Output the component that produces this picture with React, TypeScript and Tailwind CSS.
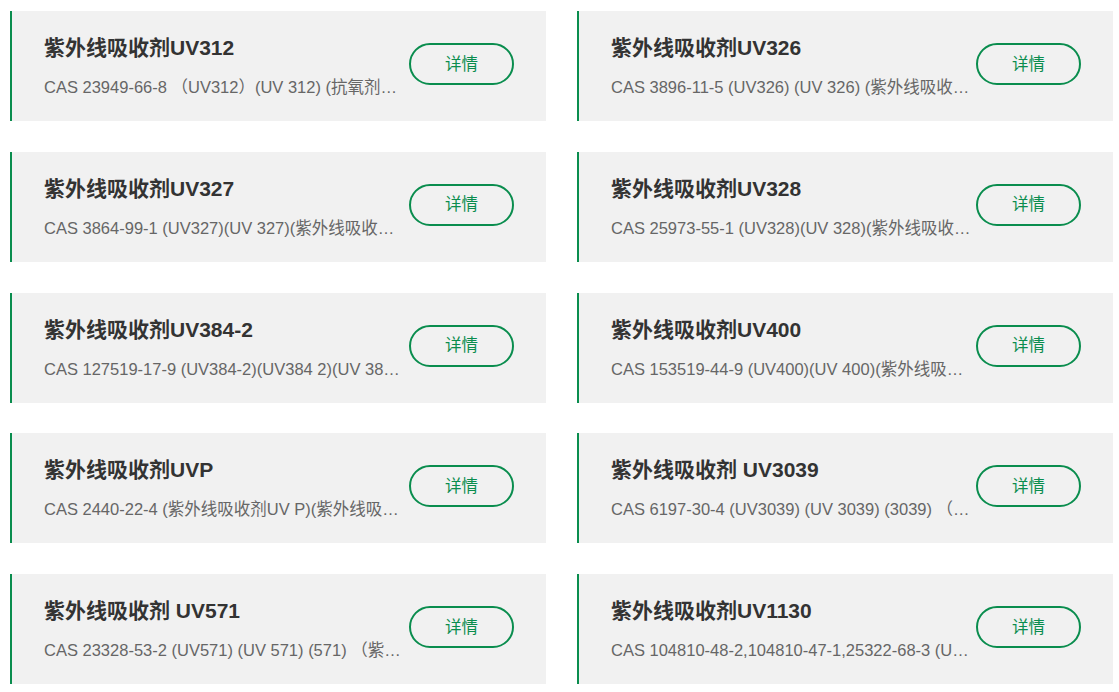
import React from "react";

interface Product {
  name: string,
  cas: string
}

const products: Product[] = [
  { name: "紫外线吸收剂UV312", cas: "CAS 23949-66-8 （UV312）(UV 312) (抗氧剂UV312) (紫外线吸收剂312)" },
  { name: "紫外线吸收剂UV326", cas: "CAS 3896-11-5 (UV326) (UV 326) (紫外线吸收剂UV326)" },
  { name: "紫外线吸收剂UV327", cas: "CAS 3864-99-1 (UV327)(UV 327)(紫外线吸收剂UV327)" },
  { name: "紫外线吸收剂UV328", cas: "CAS 25973-55-1 (UV328)(UV 328)(紫外线吸收剂UV328)" },
  { name: "紫外线吸收剂UV384-2", cas: "CAS 127519-17-9 (UV384-2)(UV384 2)(UV 384-2)(紫外线吸收剂)" },
  { name: "紫外线吸收剂UV400", cas: "CAS 153519-44-9 (UV400)(UV 400)(紫外线吸收剂UV400)" },
  { name: "紫外线吸收剂UVP", cas: "CAS 2440-22-4 (紫外线吸收剂UV P)(紫外线吸收剂UVP)" },
  { name: "紫外线吸收剂 UV3039", cas: "CAS 6197-30-4 (UV3039) (UV 3039) (3039) （紫外线吸收剂）" },
  { name: "紫外线吸收剂 UV571", cas: "CAS 23328-53-2 (UV571) (UV 571) (571) （紫外线吸收剂）" },
  { name: "紫外线吸收剂UV1130", cas: "CAS 104810-48-2,104810-47-1,25322-68-3 (UV1130)" },
];

const ProductCard: React.FC<{ product: Product }> = ({ product }) => {
  return (
    <div className="flex items-start h-[110px] bg-[#f1f1f1] border-l-2 border-[#0a8d4e] pl-[32px]">
      <div className="w-[360px] shrink-0 pt-[23px]">
        <h3 className="text-[21px] leading-[28px] font-bold text-[#333] whitespace-nowrap">{product.name}</h3>
        <p className="mt-[13px] text-[16.5px] leading-[24px] text-[#666] truncate">{product.cas}</p>
      </div>
      <button className="ml-[5px] mt-[32px] w-[105px] h-[42px] shrink-0 rounded-full border-2 border-[#0a8d4e] text-[16.5px] text-[#0a8d4e] flex items-center justify-center">
        详情
      </button>
    </div>
  );
};

const App: React.FC = () => {
  return (
    <div className="w-[1119px] h-[692px] bg-white overflow-hidden pl-[10px] pt-[11px] font-['Liberation_Sans','Noto_Sans_CJK_SC',sans-serif]">
      <div className="grid grid-cols-[536px_536px] gap-x-[31px] gap-y-[30.75px]">
        {products.map((p) => (
          <ProductCard key={p.name} product={p} />
        ))}
      </div>
    </div>
  );
};

export default App;
